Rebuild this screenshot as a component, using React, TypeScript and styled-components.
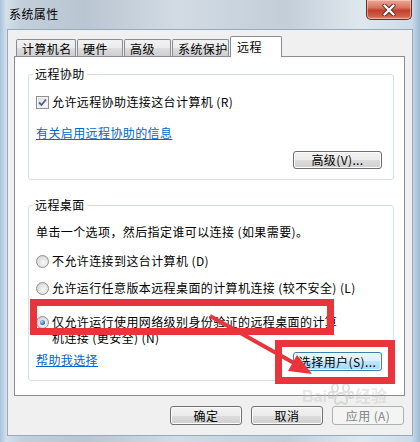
import React from 'react';
import styled, { createGlobalStyle, css } from 'styled-components';

const GlobalStyle = createGlobalStyle`
  html, body {
    margin: 0;
    padding: 0;
  }
  body {
    font-family: "Noto Sans CJK SC", "Noto Sans", sans-serif;
    font-size: 12px;
    letter-spacing: 0.4px;
    color: #000;
  }
`;

const Window = styled.div`
  position: relative;
  width: 420px;
  height: 442px;
  box-sizing: border-box;
  display: flex;
  flex-direction: column;
  overflow: hidden;
  background: linear-gradient(
    90deg,
    #a9c3dd 0%,
    #d3e0ec 1.5%,
    #c3d0dc 5%,
    #b9c5d1 20%,
    #d2dbe4 42%,
    #c3ced9 68%,
    #dfe7ee 86%,
    #cddbe8 98%,
    #9fb9d3 100%
  );
`;

const TitleBar = styled.div`
  height: 29px;
  display: flex;
  align-items: flex-start;
  padding-left: 9px;
`;

const TitleText = styled.div`
  flex: 1;
  margin-top: 6px;
  line-height: 16px;
`;

const CloseButton = styled.div`
  width: 46px;
  height: 20px;
  margin-right: 8px;
  box-sizing: border-box;
  border: 1px solid #6a2e25;
  border-top: none;
  border-radius: 0 0 5px 5px;
  background: linear-gradient(#e9a996 0%, #d87460 40%, #c2402b 55%, #cf5e48 85%, #e08b74 100%);
  box-shadow: inset 0 0 0 1px rgba(255, 220, 210, 0.5);
  display: flex;
  align-items: center;
  justify-content: center;
`;

const Client = styled.div`
  margin: 0 7px 6px;
  flex: 1;
  border: 1px solid #97a9bd;
  background: #f0f0f0;
  padding: 6px 7px 8px 6px;
  display: flex;
  flex-direction: column;
`;

const TabRow = styled.div`
  height: 20px;
  display: flex;
  align-items: flex-end;
  gap: 1px;
  padding-left: 2px;
  position: relative;
  z-index: 1;
`;

const Tab = styled.div<{ $w: number; $active?: boolean }>`
  width: ${(p) => p.$w}px;
  box-sizing: border-box;
  border: 1px solid #898c95;
  border-bottom: none;
  border-radius: 2px 2px 0 0;
  line-height: 16px;
  white-space: nowrap;
  overflow: hidden;
  ${(p) =>
    p.$active
      ? css`
          height: 21px;
          margin-bottom: -1px;
          padding: 2px 0 0 6px;
          background: #fff;
        `
      : css`
          height: 17px;
          padding: 1px 0 0 5px;
          background: linear-gradient(#f2f2f2 0%, #ebebeb 50%, #dddddd 50%, #cfcfcf 100%);
        `}
`;

const Panel = styled.div`
  border: 1px solid #898c95;
  background: #fff;
  padding: 0 10px 14px 13px;
  display: flex;
  flex-direction: column;
`;

const GroupBox = styled.fieldset<{ $top: number }>`
  margin: ${(p) => p.$top}px 0 0;
  padding: 0;
  min-width: 0;
  border: 1px solid #d5dfe5;
  border-radius: 3px;
`;

const Legend = styled.legend`
  margin-left: 4px;
  padding: 0 2px;
  line-height: 16px;
  font-size: 12px;
`;

const GroupBody = styled.div<{ $pt: number; $pb: number }>`
  display: flex;
  flex-direction: column;
  padding: ${(p) => p.$pt}px 11px ${(p) => p.$pb}px 7px;
`;

const OptionRow = styled.div<{ $mt?: number }>`
  display: flex;
  align-items: center;
  margin-top: ${(p) => p.$mt ?? 0}px;
  line-height: 16px;
  white-space: pre;
`;

const WrapRow = styled.div<{ $mt?: number }>`
  display: flex;
  align-items: flex-start;
  margin-top: ${(p) => p.$mt ?? 0}px;
`;

const WrapText = styled.div`
  line-height: 16px;
  white-space: pre;
`;

const CheckBox = styled.span`
  width: 13px;
  height: 13px;
  box-sizing: border-box;
  margin-right: 3px;
  border: 1px solid #8e8f8f;
  background: linear-gradient(135deg, #dcdcdc, #fdfdfd);
  box-shadow: inset 0 0 0 1px #f4f4f4;
  display: flex;
  align-items: center;
  justify-content: center;
  flex-shrink: 0;
`;

const Radio = styled.span<{ $checked?: boolean }>`
  width: 13px;
  height: 13px;
  box-sizing: border-box;
  margin-right: 3px;
  margin-top: ${(p) => (p.$checked ? 2 : 0)}px;
  border-radius: 50%;
  border: 1px solid #8e8f8f;
  background: radial-gradient(circle at 60% 60%, #f8f8f8 0%, #e0e0e0 55%, #c8c8c8 100%);
  display: flex;
  align-items: center;
  justify-content: center;
  flex-shrink: 0;
  &::after {
    content: '';
    display: ${(p) => (p.$checked ? 'block' : 'none')};
    width: 5px;
    height: 5px;
    border-radius: 50%;
    background: radial-gradient(circle at 35% 35%, #b8e0ff 0%, #3f86d0 50%, #1b4f92 100%);
  }
`;

const Link = styled.a<{ $mt?: number }>`
  align-self: flex-start;
  margin-top: ${(p) => p.$mt ?? 0}px;
  color: #0066cc;
  text-decoration: underline;
  line-height: 16px;
  cursor: pointer;
`;

const ButtonRow = styled.div<{ $mt: number; $between?: boolean }>`
  display: flex;
  align-items: center;
  justify-content: ${(p) => (p.$between ? 'space-between' : 'flex-end')};
  margin-top: ${(p) => p.$mt}px;
`;

const Button = styled.div<{ $w: number; $h: number; $hover?: boolean; $disabled?: boolean }>`
  width: ${(p) => p.$w}px;
  height: ${(p) => p.$h}px;
  box-sizing: border-box;
  border: 1px solid #707070;
  border-radius: 3px;
  background: linear-gradient(#f2f2f2 0%, #ebebeb 50%, #dddddd 50%, #cfcfcf 100%);
  box-shadow: inset 0 0 0 1px #fcfcfc;
  display: flex;
  align-items: center;
  justify-content: center;
  line-height: 16px;
  white-space: pre;
  ${(p) =>
    p.$hover &&
    css`
      border-color: #3c7fb1;
      background: linear-gradient(#eaf6fd 0%, #d9f0fc 50%, #bee6fd 50%, #a7d9f5 100%);
    `}
  ${(p) =>
    p.$disabled &&
    css`
      border-color: #adb2b5;
      background: #f4f4f4;
      box-shadow: none;
      color: #838383;
    `}
`;

const FooterRow = styled.div`
  display: flex;
  justify-content: flex-end;
  gap: 9px;
  margin-top: 10px;
  padding-right: 1px;
`;

const RedBox = styled.div<{ $x: number; $y: number; $w: number; $h: number }>`
  position: absolute;
  left: ${(p) => p.$x}px;
  top: ${(p) => p.$y}px;
  width: ${(p) => p.$w}px;
  height: ${(p) => p.$h}px;
  box-sizing: border-box;
  border: 7px solid #e8343a;
  pointer-events: none;
`;

const ArrowLayer = styled.svg`
  position: absolute;
  left: 0;
  top: 0;
  pointer-events: none;
`;

const Watermark = styled.div`
  position: absolute;
  left: 302px;
  top: 382px;
  display: flex;
  align-items: flex-end;
  gap: 1px;
  font-family: "Liberation Sans", "Noto Sans CJK SC", sans-serif;
  font-weight: bold;
  font-size: 16px;
  line-height: 18px;
  letter-spacing: 0;
  color: rgba(195, 195, 195, 0.4);
  pointer-events: none;
`;

const Check = () => (
  <svg width="9" height="9" viewBox="0 0 9 9">
    <path d="M1 4.5 L3.5 7 L8 1.5" fill="none" stroke="#4a5f97" strokeWidth="1.8" />
  </svg>
);

const CloseX = () => (
  <svg width="14" height="12" viewBox="0 0 14 12">
    <path d="M2.5 1.5 L11.5 10.5 M11.5 1.5 L2.5 10.5" stroke="#5a2a22" strokeWidth="4" strokeLinecap="round" />
    <path d="M2.5 1.5 L11.5 10.5 M11.5 1.5 L2.5 10.5" stroke="#fff" strokeWidth="2.4" strokeLinecap="round" />
  </svg>
);

const Paw = () => (
  <svg width="26" height="24" viewBox="0 0 26 24">
    <g fill="none" stroke="rgba(195,195,195,0.55)" strokeWidth="2">
      <ellipse cx="7" cy="6" rx="3" ry="4" />
      <ellipse cx="18" cy="6" rx="3" ry="4" />
      <ellipse cx="3" cy="13" rx="2.5" ry="3" />
      <ellipse cx="23" cy="13" rx="2.5" ry="3" />
      <path d="M13 11 C7 11 5 21 9 22 C11 22 12 20 13 20 C14 20 15 22 17 22 C21 21 19 11 13 11 Z" />
    </g>
  </svg>
);

const tabs = [
  { label: '计算机名', w: 60 },
  { label: '硬件', w: 46 },
  { label: '高级', w: 47 },
  { label: '系统保护', w: 57 },
  { label: '远程', w: 52, active: true },
];

export default function App() {
  return (
    <>
      <GlobalStyle />
      <Window>
        <TitleBar>
          <TitleText>系统属性</TitleText>
          <CloseButton>
            <CloseX />
          </CloseButton>
        </TitleBar>
        <Client>
          <TabRow>
            {tabs.map((t) => (
              <Tab key={t.label} $w={t.w} $active={t.active}>
                {t.label}
              </Tab>
            ))}
          </TabRow>
          <Panel>
            <GroupBox $top={9}>
              <Legend>远程协助</Legend>
              <GroupBody $pt={12} $pb={10}>
                <OptionRow>
                  <CheckBox>
                    <Check />
                  </CheckBox>
                  允许远程协助连接这台计算机 (R)
                </OptionRow>
                <Link $mt={15}>有关启用远程协助的信息</Link>
                <ButtonRow $mt={10}>
                  <Button $w={89} $h={18}>高级(V)...</Button>
                </ButtonRow>
              </GroupBody>
            </GroupBox>
            <GroupBox $top={17}>
              <Legend>远程桌面</Legend>
              <GroupBody $pt={11} $pb={9}>
                <OptionRow>单击一个选项，然后指定谁可以连接 (如果需要)。</OptionRow>
                <OptionRow $mt={13}>
                  <Radio />
                  不允许连接到这台计算机 (D)
                </OptionRow>
                <OptionRow $mt={11}>
                  <Radio />
                  允许运行任意版本远程桌面的计算机连接 (较不安全) (L)
                </OptionRow>
                <WrapRow $mt={18}>
                  <Radio $checked />
                  <WrapText>
                    仅允许运行使用网络级别身份验证的远程桌面的计算
                    <br />
                    机连接 (更安全) (N)
                  </WrapText>
                </WrapRow>
                <ButtonRow $mt={6} $between>
                  <Link>帮助我选择</Link>
                  <Button $w={89} $h={19} $hover>
                    选择用户(S)...
                  </Button>
                </ButtonRow>
              </GroupBody>
            </GroupBox>
          </Panel>
          <FooterRow>
            <Button $w={72} $h={19}>确定</Button>
            <Button $w={72} $h={19}>取消</Button>
            <Button $w={72} $h={19} $disabled>
              应用 (A)
            </Button>
          </FooterRow>
        </Client>

        <Watermark>
          Bai
          <Paw />
          经验
        </Watermark>
        <RedBox $x={30} $y={299} $w={304} $h={36} />
        <RedBox $x={275} $y={340} $w={120} $h={44} />
        <ArrowLayer width="420" height="442" viewBox="0 0 420 442">
          <line x1="210" y1="316" x2="294" y2="363" stroke="#e8343a" strokeWidth="4" />
          <polygon points="312,374 288,371 297,355" fill="#e8343a" />
        </ArrowLayer>
      </Window>
    </>
  );
}
